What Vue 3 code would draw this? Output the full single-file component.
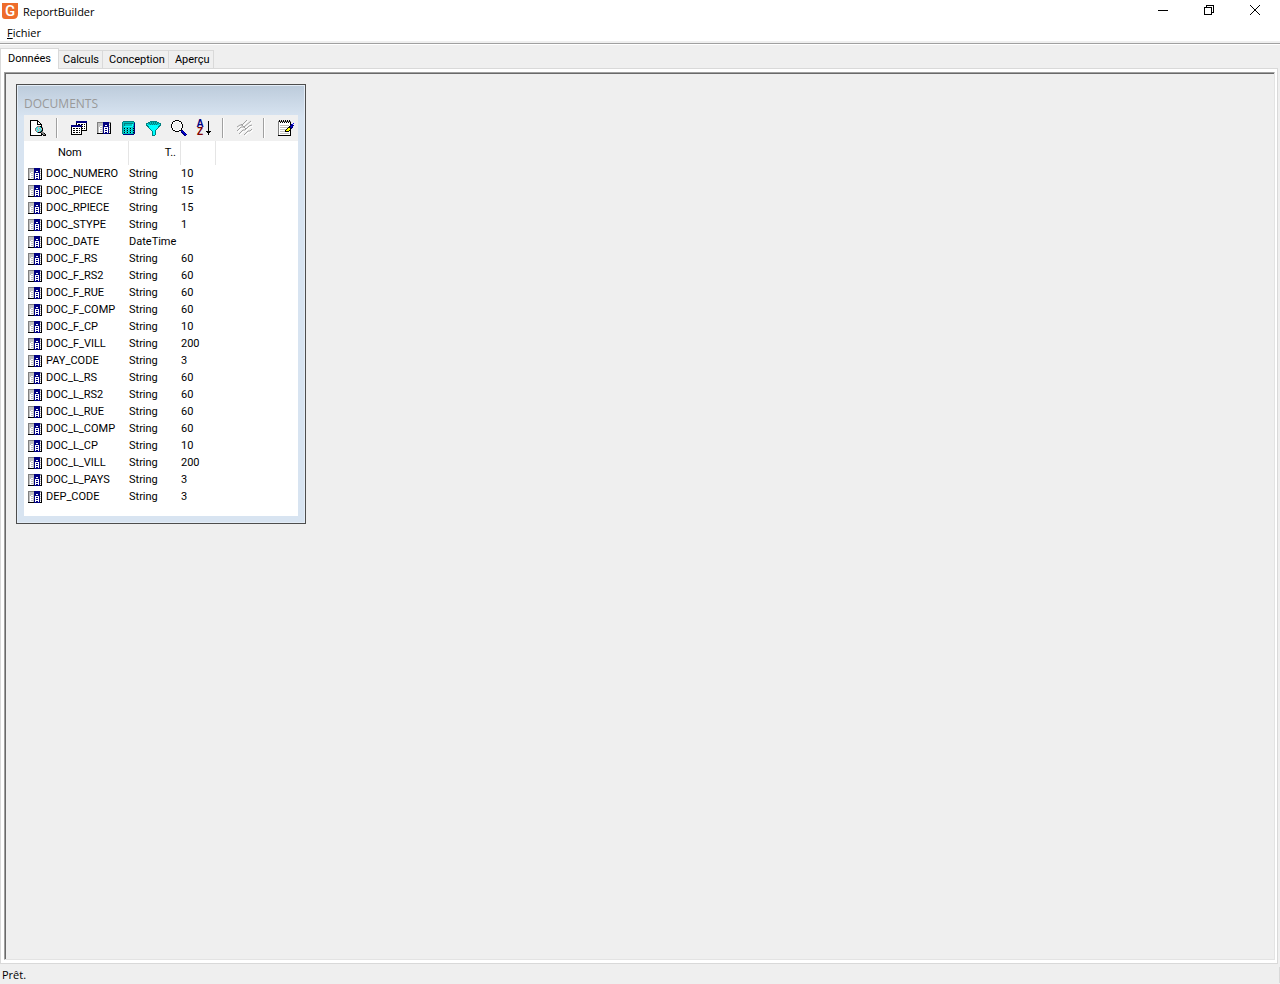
<script setup>
import { ref } from 'vue'

const tabs = ['Données', 'Calculs', 'Conception', 'Aperçu']
const activeTab = ref('Données')

const fields = [
  ['DOC_NUMERO', 'String', '10'],
  ['DOC_PIECE', 'String', '15'],
  ['DOC_RPIECE', 'String', '15'],
  ['DOC_STYPE', 'String', '1'],
  ['DOC_DATE', 'DateTime', ''],
  ['DOC_F_RS', 'String', '60'],
  ['DOC_F_RS2', 'String', '60'],
  ['DOC_F_RUE', 'String', '60'],
  ['DOC_F_COMP', 'String', '60'],
  ['DOC_F_CP', 'String', '10'],
  ['DOC_F_VILL', 'String', '200'],
  ['PAY_CODE', 'String', '3'],
  ['DOC_L_RS', 'String', '60'],
  ['DOC_L_RS2', 'String', '60'],
  ['DOC_L_RUE', 'String', '60'],
  ['DOC_L_COMP', 'String', '60'],
  ['DOC_L_CP', 'String', '10'],
  ['DOC_L_VILL', 'String', '200'],
  ['DOC_L_PAYS', 'String', '3'],
  ['DEP_CODE', 'String', '3'],
]

// Bitmap icons: one character per pixel, looked up in the palette.
const palette = {
  k: '#000000', w: '#ffffff', g: '#c0c0c0', d: '#808080', n: '#000080',
  t: '#008080', m: '#00c0c0', c: '#00ffff', y: '#ffff00', b: '#0000ff',
}

const bitmaps = {
  preview: [
    'kkkkkkkk........',
    'kwwwwwwkk.......',
    'kwwwwwwkwk......',
    'kwwwwwwkwwk.....',
    'kwwwwwwkkkkk....',
    'kwwwwwwwwwwk....',
    'kwwwwwwdddkk....',
    'kwwwwwdcggckd...',
    'kwwwwdcggcggk...',
    'kwwwwdgcggcgk...',
    'kwwwwdggcggtk...',
    'kwwwwwdcggtkd...',
    'kwwwwwwdkkkddd..',
    'kwwwwwwwwwwkddk.',
    'kwwwwwwwwwwkkddk',
    'kkkkkkkkkkkk.kkk',
  ],
  tables: [
    '.....nnnnnnnnnnn',
    '.....nnnnnnnnnnn',
    '.....kwwwwwwwwwk',
    '.....kwkkwkkwkwk',
    'nnnnnnnnnnnwwwwk',
    'nnnnnnnnnnnkwkwk',
    'kwwwwwwwwwkwwwwk',
    'kwkkwkkwkwkkwkwk',
    'kwwwwwwwwwkwwwwk',
    'kwkkwkkwkwkkkkkk',
    'kwwwwwwwwwk.....',
    'kwkkwkkwkwk.....',
    'kwwwwwwwwwk.....',
    'kkkkkkkkkkk.....',
  ],
  columns: [
    'ddddddnnnnnndd',
    'dgggggnnnnnngk',
    'dgggggnnnnnnwk',
    'dgggggnnwwnngk',
    'dggwwgnnnnnnwk',
    'dgwgggnwwwwngk',
    'dgwwwgnwnnwnwk',
    'dgwgggnwwwwngk',
    'dgwwwgnwnnwnwk',
    'dgwgggnwwwwngk',
    'dgwwwgnwnnwnwk',
    'kkkkkknnnnnnkk',
  ],
  calc: [
    '.ttttttttttt.',
    'tmmmmmmmmmmmt',
    'tmtttttttttmn',
    'tmtmmmmmmmcmn',
    'tmtmmmmmmmcmn',
    'tmccccccccctn',
    'tmmmmmmmmmmmn',
    'tmkcmkcmkcmkn',
    'tmmmmmmmmmmmn',
    'tmkcmkcmkcmkn',
    'tmmmmmmmmmmmn',
    'tmkcmkcmkcmkn',
    'tmmmmmmmmmmtn',
    '.nnnnnnnnnnn.',
  ],
  filter: [
    '....ttttttt....',
    '..ttmtmtmtmtt..',
    'ttmtmtmtmtmtmtt',
    'tcmmtmtmtmtmmct',
    'ttccccccccccctt',
    '.ttccccccccctt.',
    '..tccccccccct..',
    '...tccccccct...',
    '....tccccct....',
    '.....tccct.....',
    '......tcct.....',
    '......tcct.....',
    '......tcct.....',
    '......tcct.....',
    '......ttt......',
  ],
  search: [
    '....kkkk........',
    '..kkwwwwkk......',
    '.kww....wwk.....',
    '.kw......wk.....',
    'kw........wk....',
    'kw........wk....',
    'kw........wk....',
    'kw........wk....',
    '.kw......wk.....',
    '.kww....wwk.....',
    '..kkwwwwkknn....',
    '....kkkk..nbn...',
    '..........nnbn..',
    '...........nnbn.',
    '............nnbn',
    '.............nn.',
  ],
  notes: [
    '.k.k.k.k.k.k....',
    'dkdkdkdkdkdkd...',
    'dwkwkwkwkwkwk...',
    'dwwwwwwwwwwwk..b',
    'dwwwwwwwwwwwknb.',
    'dwgggggggggwnnnn',
    'dwwwwwwwwwwknbn.',
    'dwggggggggkknnn.',
    'dwwwwwwwwkyykn..',
    'dwggggggkyyyk...',
    'dwwwwwwkyyykk...',
    'dwgggggkkkkwk...',
    'dwwwwwwwwwwwk...',
    'dwgggggggggwk...',
    'dwwwwwwwwwwwk...',
    'kkkkkkkkkkkkk...',
  ],
}

function runs(name) {
  const out = []
  bitmaps[name].forEach((row, y) => {
    let x = 0
    while (x < row.length) {
      const c = row[x]
      let end = x + 1
      while (end < row.length && row[end] === c) end++
      if (c !== '.') out.push({ x, y, w: end - x, fill: palette[c] })
      x = end
    }
  })
  return out
}

const icons = Object.fromEntries(
  Object.keys(bitmaps).map((name) => [
    name,
    { w: bitmaps[name][0].length, h: bitmaps[name].length, cells: runs(name) },
  ]),
)

const tools = [
  { id: 'preview', label: 'Aperçu des données' },
  { id: 'sep' },
  { id: 'tables', label: 'Tables' },
  { id: 'columns', label: 'Champs' },
  { id: 'calc', label: 'Calculs' },
  { id: 'filter', label: 'Filtre' },
  { id: 'search', label: 'Recherche' },
  { id: 'sort', label: 'Tri' },
  { id: 'sep' },
  { id: 'link', label: 'Lien', disabled: true },
  { id: 'sep' },
  { id: 'notes', label: 'Propriétés' },
]
</script>

<template>
  <div class="app">
    <header class="titlebar">
      <svg class="logo" width="16" height="16" viewBox="0 0 16 16" aria-hidden="true">
        <path d="M0 0H16V11Q16 16 11 16H3Q0 16 0 13Z" fill="#ee6c2b" />
        <text x="8" y="13" text-anchor="middle">G</text>
      </svg>
      <h1>ReportBuilder</h1>
      <div class="winbtns">
        <button type="button" aria-label="Réduire">
          <svg width="12" height="12" viewBox="0 0 12 12" shape-rendering="crispEdges"><path d="M1 6.500H11" /></svg>
        </button>
        <button type="button" aria-label="Restaurer">
          <svg width="12" height="12" viewBox="0 0 12 12" shape-rendering="crispEdges"><path d="M1.500 3.500H8.500V10.500H1.500ZM3.500 3V1.500H10.500V8.500H9" /></svg>
        </button>
        <button type="button" aria-label="Fermer">
          <svg width="12" height="12" viewBox="0 0 12 12"><path d="M1 1L11 11M11 1L1 11" /></svg>
        </button>
      </div>
    </header>

    <nav class="menubar">
      <button type="button"><u>F</u>ichier</button>
    </nav>

    <div class="tabs" role="tablist">
      <button
        v-for="tab in tabs"
        :key="tab"
        type="button"
        role="tab"
        :aria-selected="activeTab === tab"
        :class="{ active: activeTab === tab }"
        @click="activeTab = tab"
      >{{ tab }}</button>
    </div>

    <main class="page">
      <div class="workspace">
        <section class="panel">
          <h2>DOCUMENTS</h2>
          <div class="toolbar">
            <template v-for="(tool, i) in tools" :key="i">
              <span v-if="tool.id === 'sep'" class="sep"></span>
              <button v-else type="button" :aria-label="tool.label" :disabled="tool.disabled">
                <svg v-if="tool.id === 'sort'" class="sort" width="16" height="16" viewBox="0 0 16 16">
                  <text class="az a" x="4" y="7" text-anchor="middle">A</text>
                  <text class="az z" x="4" y="15" text-anchor="middle">Z</text>
                  <path d="M12 1H13V11H15V12H14V13H13V15H12V13H11V12H10V11H12Z" fill="#000" shape-rendering="crispEdges" />
                </svg>
                <svg v-else-if="tool.id === 'link'" width="18" height="16" viewBox="0 0 18 16" fill="none">
                  <path transform="translate(1 1)" stroke="#fff" d="M1 7L4 5H6L11 0M1 11L5 7H8L15 1M3 14L7 10H9L13 6L16 5M8 15L12 11H14L16 9M5 4L10 9" />
                  <path stroke="#a0a0a0" d="M1 7L4 5H6L11 0M1 11L5 7H8L15 1M3 14L7 10H9L13 6L16 5M8 15L12 11H14L16 9M5 4L10 9" />
                </svg>
                <svg
                  v-else
                  :width="icons[tool.id].w"
                  :height="icons[tool.id].h"
                  :viewBox="`0 0 ${icons[tool.id].w} ${icons[tool.id].h}`"
                  shape-rendering="crispEdges"
                >
                  <rect v-for="(c, k) in icons[tool.id].cells" :key="k" :x="c.x" :y="c.y" :width="c.w" height="1" :fill="c.fill" />
                </svg>
              </button>
            </template>
          </div>
          <div class="list">
            <table>
              <colgroup>
                <col class="c-name" />
                <col class="c-type" />
                <col class="c-size" />
                <col />
              </colgroup>
              <thead>
                <tr>
                  <th class="h-name">Nom</th>
                  <th class="h-type">T..</th>
                  <th></th>
                  <td></td>
                </tr>
              </thead>
              <tbody>
                <tr v-for="[name, type, size] in fields" :key="name">
                  <td>
                    <span class="field">
                      <svg width="14" height="12" viewBox="0 0 14 12" shape-rendering="crispEdges" aria-hidden="true">
                        <rect v-for="(c, k) in icons.columns.cells" :key="k" :x="c.x" :y="c.y" :width="c.w" height="1" :fill="c.fill" />
                      </svg>
                      <span>{{ name }}</span>
                    </span>
                  </td>
                  <td>{{ type }}</td>
                  <td>{{ size }}</td>
                  <td></td>
                </tr>
              </tbody>
            </table>
          </div>
        </section>
      </div>
    </main>

    <footer class="status"><span>Prêt.</span></footer>
  </div>
</template>

<style>
body {
  margin: 0;
  background: #efefef;
}
</style>

<style scoped>
.app {
  display: flex;
  flex-direction: column;
  min-height: 100vh;
  box-sizing: border-box;
  color: #000;
  font: 11px/16px "Open Sans", "Noto Sans", sans-serif;
}
button {
  margin: 0;
  padding: 0;
  border: 0;
  background: none;
  color: inherit;
  font: inherit;
}
.titlebar {
  display: flex;
  align-items: center;
  height: 24px;
  padding-left: 2px;
  background: #fff;
}
.logo {
  margin-bottom: 2px;
}
.logo text {
  fill: #fff;
  font: 500 15px Roboto, sans-serif;
}
h1 {
  margin: 0 0 0 5px;
  font: inherit;
  line-height: 24px;
}
.winbtns {
  display: flex;
  margin-left: auto;
  padding-right: 2px;
}
.winbtns button {
  display: flex;
  align-items: center;
  justify-content: center;
  width: 46px;
  height: 20px;
  margin-bottom: 4px;
}
.winbtns path {
  fill: none;
  stroke: #000;
}
.menubar {
  height: 17px;
  padding-left: 7px;
  background: #fff;
  box-shadow: 0 2px #efefef, 0 3px #a0a0a0, 0 4px #fff;
}
.menubar button {
  line-height: 17px;
}
.tabs {
  display: flex;
  align-items: flex-end;
  height: 20px;
  margin-top: 7px;
  position: relative;
}
.tabs button {
  height: 18px;
  padding: 0 3px 0 4px;
  border: 1px solid #d9d9d9;
  border-bottom: 0;
  border-left: 0;
  font: 11px/18px Roboto, "Liberation Sans", sans-serif;
}
.tabs button:not(.active):nth-child(n + 3) {
  padding-left: 6px;
}
.tabs button.active {
  height: 21px;
  margin-bottom: -1px;
  padding: 0 7px 1px;
  border-left: 1px solid #d9d9d9;
  background: #fff;
}
.page {
  display: flex;
  flex: 1;
  margin-right: 2px;
  padding: 3px 2px 3px 3px;
  border: 1px solid #d9d9d9;
  background: #fff;
}
.workspace {
  flex: 1;
  padding: 10px;
  border: 1px solid #a0a0a0;
  border-right-color: #e3e3e3;
  border-bottom-color: #e3e3e3;
  background: #efefef;
  box-shadow: inset 1px 1px #696969;
}
.panel {
  box-sizing: border-box;
  width: 290px;
  margin: 1px;
  padding: 0 7px 7px;
  border: 1px solid #4d4d4d;
  background: linear-gradient(#bccbdb, #d8e4f1 32px);
  box-shadow: inset 0 0 0 1px #e4edf7;
}
h2 {
  margin: 0;
  padding-top: 7px;
  color: #999;
  font: 12px/23px "Open Sans", sans-serif;
}
.toolbar {
  display: flex;
  height: 26px;
  padding-left: 1px;
  background: #f0f0f0;
}
.toolbar button {
  display: flex;
  align-items: center;
  justify-content: center;
  width: 25px;
}
.sort {
  overflow: visible;
}
.sep {
  width: 16px;
  background: linear-gradient(#a0a0a0, #a0a0a0) 6px 3px / 1px 20px no-repeat,
    linear-gradient(#fff, #fff) 7px 3px / 1px 20px no-repeat;
}
.az {
  font: 700 10px "Liberation Sans", sans-serif;
}
.a {
  fill: #000080;
}
.z {
  fill: #800000;
}
.list {
  padding-bottom: 11px;
  background: #fff;
}
table {
  width: 100%;
  border-collapse: collapse;
  table-layout: fixed;
  font: 11px/16px Roboto, "Liberation Sans", sans-serif;
}
.c-name {
  width: 105px;
}
.c-type {
  width: 52px;
}
.c-size {
  width: 35px;
}
th,
td {
  padding: 0;
  font-weight: 400;
  white-space: nowrap;
  text-align: left;
}
th {
  height: 24px;
  box-shadow: inset -1px 0 #e5e5e5;
}
.h-name {
  padding-left: 34px;
}
.h-type {
  padding-right: 5px;
  text-align: right;
}
tbody td {
  padding-top: 1px;
}
.field {
  display: flex;
  align-items: center;
  gap: 4px;
  padding-left: 4px;
}
.status {
  box-sizing: border-box;
  height: 20px;
  padding: 2px 0 0 2px;
  background: linear-gradient(#d9d9d9, #d9d9d9) 100% 3px / 1px 16px no-repeat;
  line-height: 18px;
}
</style>
